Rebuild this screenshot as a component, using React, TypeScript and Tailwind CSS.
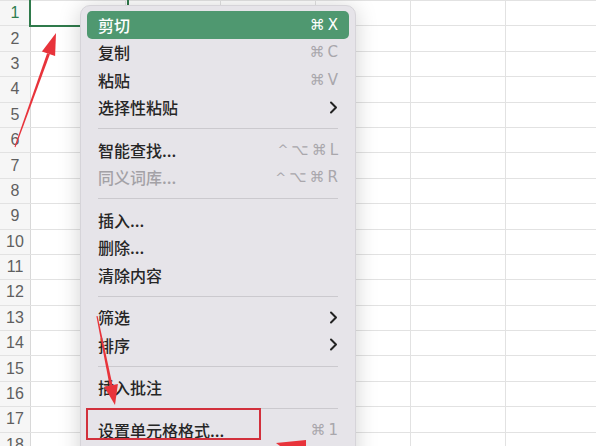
import React from "react";

type Item =
  | { kind: "sep" }
  | { kind: "item"; label: string; shortcut?: string; sub?: boolean; active?: boolean; disabled?: boolean };

const MENU: Item[] = [
  { kind: "item", label: "剪切", shortcut: "⌘X", active: true },
  { kind: "item", label: "复制", shortcut: "⌘C" },
  { kind: "item", label: "粘贴", shortcut: "⌘V" },
  { kind: "item", label: "选择性粘贴", sub: true },
  { kind: "sep" },
  { kind: "item", label: "智能查找...", shortcut: "^⌥⌘L" },
  { kind: "item", label: "同义词库...", shortcut: "^⌥⌘R", disabled: true },
  { kind: "sep" },
  { kind: "item", label: "插入..." },
  { kind: "item", label: "删除..." },
  { kind: "item", label: "清除内容" },
  { kind: "sep" },
  { kind: "item", label: "筛选", sub: true },
  { kind: "item", label: "排序", sub: true },
  { kind: "sep" },
  { kind: "item", label: "插入批注" },
  { kind: "sep" },
  { kind: "item", label: "设置单元格格式...", shortcut: "⌘1" },
];

const ROWS = Array.from({ length: 18 }, (_, i) => i + 1);
const COLS = [0, 1, 2, 3, 4, 5];

function Chevron() {
  return (
    <svg width="9" height="13" viewBox="0 0 9 13" fill="none">
      <path d="M2 1.5 L7 6.5 L2 11.5" stroke="#222" strokeWidth="2" strokeLinecap="round" strokeLinejoin="round" />
    </svg>
  );
}

function Shortcut({ text, light }: { text: string; light?: boolean }) {
  return (
    <span
      className={`flex items-center gap-[3px] text-[15px] ${light ? "text-white" : "text-[#a9a7ac]"}`}
      style={{ fontFamily: '"DejaVu Sans", "Liberation Sans", sans-serif' }}
    >
      {text.split("").map((c, i) => (
        <span key={i} className={c === "^" ? "text-[13px]" : ""}>{c}</span>
      ))}
    </span>
  );
}

export default function App() {
  return (
    <div className="relative h-[446px] w-[596px] overflow-hidden bg-white" style={{ fontFamily: '"Noto Sans CJK SC", "Liberation Sans", sans-serif' }}>
      {/* sheet */}
      <div className="border-t border-[#e2e2e2]">
        {ROWS.map((r) => (
          <div key={r} className="flex h-[25.4px] border-b border-[#e2e2e2]">
            <div className={`flex w-[31px] shrink-0 items-center justify-center border-r border-[#d8d8d8] bg-[#f6f6f6] text-[16px] ${r === 1 ? "text-[#2f7d4f]" : "text-[#5f5f5f]"}`} style={{ fontFamily: '"Liberation Sans", sans-serif' }}>
              {r}
            </div>
            {COLS.map((c) => (
              <div key={c} className="w-[95px] shrink-0 border-r border-[#e2e2e2]" />
            ))}
          </div>
        ))}
      </div>

      {/* selected cell A1 */}
      <div className="absolute left-[29px] top-[-4px] h-[31px] w-[100px] border-2 border-[#2f7a4b]" />

      {/* context menu */}
      <div className="absolute left-[80px] top-[5px] h-[470px] w-[276px] rounded-[10px] border border-[#d6d4d9] bg-[#e6e4e9] px-[6px] pt-[5px] shadow-[0_2px_22px_rgba(0,0,0,0.18)]">
        {MENU.map((it, i) =>
          it.kind === "sep" ? (
            <div key={i} className="flex h-[15px] items-center px-[11px]">
              <div className="h-px w-full bg-[#cbc9ce]" />
            </div>
          ) : (
            <div
              key={i}
              className={`flex h-[27.5px] items-center justify-between rounded-[5px] px-[11px] text-[16px] font-medium ${
                it.active ? "bg-[#4f9870] text-white" : it.disabled ? "text-[#a3a1a6]" : "text-[#262626]"
              }`}
            >
              <span>{it.label}</span>
              {it.shortcut && <Shortcut text={it.shortcut} light={it.active} />}
              {it.sub && <Chevron />}
            </div>
          )
        )}
      </div>

      {/* red highlight box */}
      <div className="absolute left-[86px] top-[408px] h-[32px] w-[175px] border-2 border-[#d2303c]" />

      {/* annotation arrows */}
      <svg className="pointer-events-none absolute left-0 top-0" width="596" height="446" viewBox="0 0 596 446">
        <polygon points="15.5,147.2 14.5,146.8 47.1,53.2 49.9,54.2" fill="#e8333b" />
        <polygon points="56,33 41.9,51.4 55.1,56.1" fill="#e8333b" />
        <polygon points="97.6,316 96.4,316.2 109.6,385.7 112.5,385.1" fill="#e8333b" />
        <polygon points="115,405 104.2,386.8 117.9,384" fill="#e8333b" />
        <polygon points="276,443 306,440 306,446 280,446" fill="#e8333b" />
      </svg>
    </div>
  );
}
